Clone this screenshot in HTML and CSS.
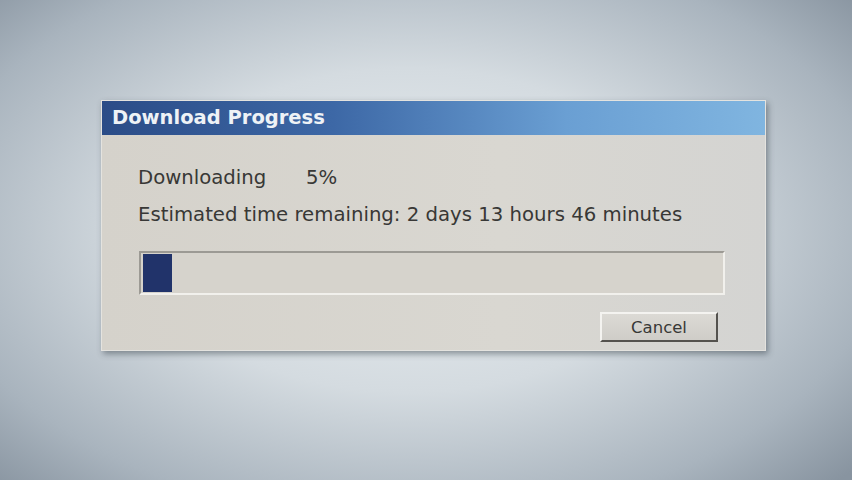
FILE: index.html
```html
<!DOCTYPE html>
<html>
<head>
<meta charset="utf-8">
<link rel="stylesheet" href="styles.css">
</head>
<body>
<div class="stage">
  <div class="dialog">
    <div class="titlebar">Download Progress</div>
    <div class="content">
      <div class="line status"><span class="label">Downloading</span><span class="pct">5%</span></div>
      <div class="line">Estimated time remaining: 2 days 13 hours 46 minutes</div>
      <div class="bar"><div class="fill" style="width:5%"></div></div>
      <div class="actions"><button class="btn">Cancel</button></div>
    </div>
  </div>
</div>
</body>
</html>
```
FILE: styles.css
```css
html, body {
  margin: 0;
  padding: 0;
  width: 852px;
  height: 480px;
  overflow: hidden;
}
.stage {
  width: 852px;
  height: 480px;
  box-sizing: border-box;
  padding: 100px 0 0 101px;
  background: radial-gradient(ellipse 70% 75% at 48% 48%, #e9eef1 0%, #d4dbe0 45%, #a9b4be 80%, #8894a0 100%);
  font-family: "DejaVu Sans", Verdana, sans-serif;
}
.dialog {
  width: 665px;
  height: 251px;
  background: linear-gradient(90deg, #d5d2cb 0%, #d9d7d1 60%, #d4d4d2 100%);
  box-shadow: 2px 3px 6px rgba(40, 50, 60, 0.45);
  border: 1px solid #e4e3df;
  box-sizing: border-box;
}
.titlebar {
  height: 34px;
  background: linear-gradient(90deg, #2b4c87 0%, #3d68a6 35%, #6a9fd3 70%, #80b5e0 100%);
  color: #eef2f6;
  font-weight: bold;
  font-size: 19.5px;
  line-height: 34px;
  padding-left: 10px;
}
.content {
  padding: 27px 40px 0 36px;
  color: #383836;
  font-size: 19.7px;
}
.line {
  height: 37px;
  line-height: 32px;
}
.label {
  display: inline-block;
  width: 168px;
}
.bar {
  margin-top: 15px;
  height: 44px;
  box-sizing: border-box;
  border-top: 2px solid #9c9a94;
  border-left: 2px solid #9c9a94;
  border-bottom: 2px solid #f1f0ec;
  border-right: 2px solid #f1f0ec;
  padding: 1px 2px;
  background: #d6d3cc;
  margin-left: 1px;
}
.fill {
  height: 100%;
  background: #21336a;
}
.actions {
  display: flex;
  justify-content: flex-end;
  margin-top: 17px;
  padding-right: 7px;
}
.btn {
  width: 118px;
  height: 30px;
  box-sizing: border-box;
  font-family: "DejaVu Sans", Verdana, sans-serif;
  font-size: 16.5px;
  color: #383836;
  background: linear-gradient(180deg, #dcdad5, #cfcdc8);
  border-top: 2px solid #f4f3f0;
  border-left: 2px solid #f4f3f0;
  border-bottom: 2px solid #54524e;
  border-right: 2px solid #54524e;
  padding: 0;
  line-height: 25px;
}
```
